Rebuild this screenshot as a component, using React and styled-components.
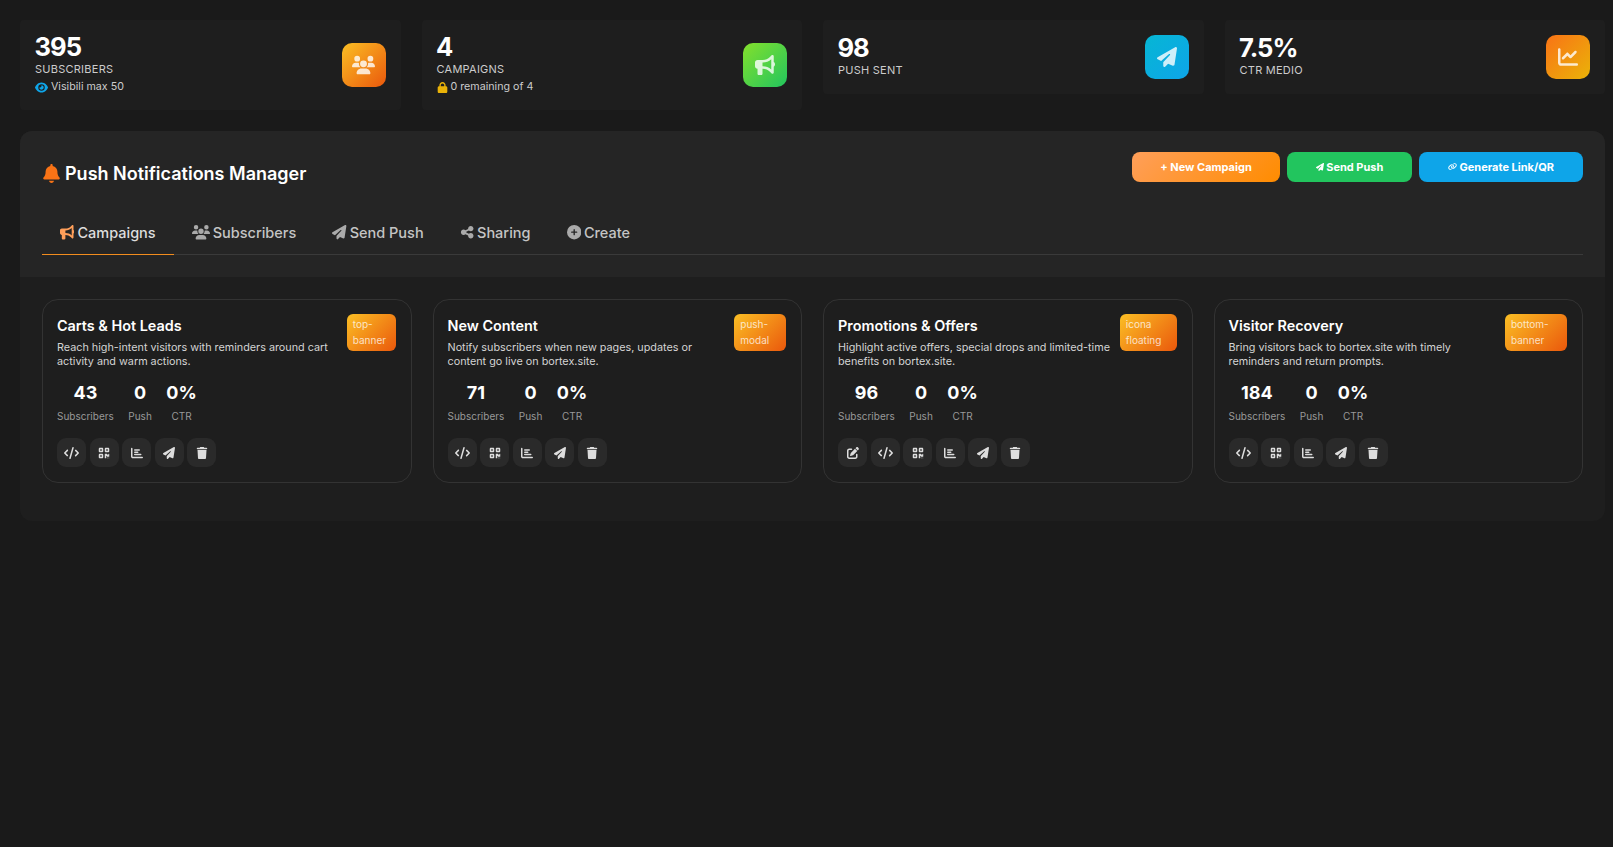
import React from "react";
import styled, { createGlobalStyle } from "styled-components";
import {
  FaBell,
  FaBullhorn,
  FaChartBar,
  FaChartLine,
  FaCirclePlus,
  FaCode,
  FaEye,
  FaLink,
  FaLock,
  FaPaperPlane,
  FaPenToSquare,
  FaQrcode,
  FaShareNodes,
  FaTrash,
  FaUsers,
} from "react-icons/fa6";

const stats = [
  { value: "395", label: "Subscribers", note: "Visibili max 50", noteIcon: "eye", icon: FaUsers, wide: true, from: "#fbbf24", to: "#ea580c" },
  { value: "4", label: "Campaigns", note: "0 remaining of 4", noteIcon: "lock", icon: FaBullhorn, from: "#84e02c", to: "#22c55e" },
  { value: "98", label: "Push sent", icon: FaPaperPlane, from: "#06b6d4", to: "#0ea5e9" },
  { value: "7.5%", label: "CTR medio", icon: FaChartLine, from: "#f97316", to: "#eab308" },
];

const tabs = [
  { name: "Campaigns", icon: FaBullhorn, active: true },
  { name: "Subscribers", icon: FaUsers, wide: true },
  { name: "Send Push", icon: FaPaperPlane },
  { name: "Sharing", icon: FaShareNodes },
  { name: "Create", icon: FaCirclePlus },
];

const campaigns = [
  { title: "Carts & Hot Leads", desc: "Reach high-intent visitors with reminders around cart activity and warm actions.", badge: "top-banner", subs: 43 },
  { title: "New Content", desc: "Notify subscribers when new pages, updates or content go live on bortex.site.", badge: "push-modal", subs: 71 },
  { title: "Promotions & Offers", desc: "Highlight active offers, special drops and limited-time benefits on bortex.site.", badge: "icona floating", subs: 96, editable: true },
  { title: "Visitor Recovery", desc: "Bring visitors back to bortex.site with timely reminders and return prompts.", badge: "bottom-banner", subs: 184 },
];

export default function App() {
  return (
    <>
      <GlobalStyle />
      <Page>
        <StatGrid>
          {stats.map((s) => (
            <StatCard key={s.label}>
              <div>
                <StatValue>{s.value}</StatValue>
                <StatLabel>{s.label}</StatLabel>
                {s.note && (
                  <StatNote>
                    {s.noteIcon === "eye" ? <FaEye color="#0ea5e9" size={13} /> : <FaLock color="#eab308" size={11} />}
                    {s.note}
                  </StatNote>
                )}
              </div>
              <StatIcon $from={s.from} $to={s.to} $wide={s.wide}>
                <s.icon />
              </StatIcon>
            </StatCard>
          ))}
        </StatGrid>

        <Panel>
          <PanelHeader>
            <TitleRow>
              <Title>
                <BellIcon />
                Push Notifications Manager
              </Title>
              <Actions>
                <ActionButton $bg="linear-gradient(135deg, #ff9f5a, #ff8c00)" $width={148}>+ New Campaign</ActionButton>
                <ActionButton $bg="#22c55e" $width={125}><FaPaperPlane size={8} /> Send Push</ActionButton>
                <ActionButton $bg="#0ea5e9" $width={164}><FaLink size={9} /> Generate Link/QR</ActionButton>
              </Actions>
            </TitleRow>
            <Tabs>
              {tabs.map((t) => (
                <Tab key={t.name} $active={t.active} $wide={t.wide}>
                  <t.icon />
                  <span>{t.name}</span>
                </Tab>
              ))}
            </Tabs>
          </PanelHeader>

          <CardGrid>
            {campaigns.map((c) => (
              <CampaignCard key={c.title}>
                <CardHead>
                  <div>
                    <CardTitle>{c.title}</CardTitle>
                    <CardDesc>{c.desc}</CardDesc>
                  </div>
                  <Badge>{c.badge}</Badge>
                </CardHead>
                <Metrics>
                  <Metric><b>{c.subs}</b><span>Subscribers</span></Metric>
                  <Metric><b>0</b><span>Push</span></Metric>
                  <Metric><b>0%</b><span>CTR</span></Metric>
                </Metrics>
                <IconRow>
                  {c.editable && <IconButton><FaPenToSquare /></IconButton>}
                  <IconButton $wide><FaCode /></IconButton>
                  <IconButton><FaQrcode /></IconButton>
                  <IconButton><FaChartBar /></IconButton>
                  <IconButton><FaPaperPlane /></IconButton>
                  <IconButton><FaTrash /></IconButton>
                </IconRow>
              </CampaignCard>
            ))}
          </CardGrid>
        </Panel>
      </Page>
    </>
  );
}

const GlobalStyle = createGlobalStyle`
  html, body {
    margin: 0;
    background: #1a1a1a;
    font-family: Inter, "Liberation Sans", sans-serif;
  }
  * {
    box-sizing: border-box;
  }
`;

const Page = styled.div`
  min-height: 847px;
  padding: 20px 8px 0 20px;
  background: #1a1a1a;
  color: #fff;
`;

const StatGrid = styled.div`
  display: grid;
  grid-template-columns: repeat(4, 1fr);
  gap: 21px;
  align-items: start;
  margin-bottom: 21px;
`;

const StatCard = styled.div`
  display: flex;
  align-items: center;
  justify-content: space-between;
  padding: 15px;
  background: #1e1e1e;
  border-radius: 4px;
`;

const StatValue = styled.div`
  margin-left: -0.5px;
  font-size: 25.6px;
  font-weight: 700;
  line-height: 24px;
  letter-spacing: -1px;
`;

const StatLabel = styled.div`
  margin-top: 2px;
  font-size: 11px;
  line-height: 17px;
  letter-spacing: 0.25px;
  text-transform: uppercase;
  color: #ccc;
`;

const StatNote = styled.div`
  display: flex;
  align-items: center;
  gap: 3px;
  margin-top: 1px;
  font-size: 10.7px;
  line-height: 16px;
  color: #ccc;
`;

const StatIcon = styled.div`
  display: flex;
  align-items: center;
  justify-content: center;
  width: 44px;
  height: 44px;
  border-radius: 10px;
  font-size: 20px;
  color: rgba(255, 255, 255, 0.8);
  background: linear-gradient(135deg, ${(p) => p.$from}, ${(p) => p.$to});

  svg {
    width: ${(p) => (p.$wide ? "1.15em" : "1em")};
  }
`;

const Panel = styled.section`
  background: #1e1e1e;
  border-radius: 12px;
`;

const PanelHeader = styled.div`
  padding: 21px 22px 22px;
  background: #252525;
  border-radius: 12px 12px 0 0;
`;

const TitleRow = styled.div`
  display: flex;
  align-items: flex-start;
  justify-content: space-between;
  height: 59px;
`;

const Title = styled.h1`
  display: flex;
  align-items: center;
  gap: 4px;
  margin: 10px 0 0;
  font-size: 18px;
  font-weight: 600;
  line-height: 24px;
`;

const BellIcon = styled(FaBell)`
  margin-top: -1px;
  font-size: 19px;
  color: #f97316;
`;

const Actions = styled.div`
  display: flex;
  gap: 7px;
`;

const ActionButton = styled.button`
  width: ${(p) => p.$width}px;
  height: 30px;
  padding: 0 0 1px;
  border: 0;
  border-radius: 8px;
  background: ${(p) => p.$bg};
  color: #fff;
  font-family: inherit;
  font-size: 11px;
  font-weight: 700;
`;

const Tabs = styled.div`
  display: flex;
  border-bottom: 1px solid #3a3a3a;
`;

const Tab = styled.div`
  display: flex;
  align-items: center;
  gap: 3px;
  height: 44px;
  margin-bottom: -1px;
  padding: 0 18px;
  font-size: 14.5px;
  font-weight: 500;
  color: ${(p) => (p.$active ? "#ddd" : "#c4c4c4")};
  border-bottom: 1px solid ${(p) => (p.$active ? "#f28c1e" : "transparent")};

  svg {
    font-size: 14.4px;
    width: ${(p) => (p.$wide ? "1.25em" : "1em")};
    color: ${(p) => (p.$active ? "#ff9f5a" : "#aaa")};
  }
`;

const CardGrid = styled.div`
  display: grid;
  grid-template-columns: repeat(4, 1fr);
  gap: 21px;
  padding: 22px 22px 38px;
`;

const CampaignCard = styled.article`
  height: 184px;
  padding: 14px 15px 14px 14px;
  border: 1px solid #333;
  border-radius: 16px;
  background: #1e1e1e;
`;

const CardHead = styled.div`
  display: flex;
  align-items: flex-start;
  justify-content: space-between;
  gap: 8px;
`;

const CardTitle = styled.h3`
  margin: 2px 0 5px;
  font-size: 14.4px;
  font-weight: 600;
  line-height: 20px;
`;

const CardDesc = styled.p`
  margin: 0;
  font-size: 10.8px;
  line-height: 13.6px;
  color: #d4d4d4;
`;

const Badge = styled.span`
  padding: 3px 6px;
  border-radius: 6px;
  font-size: 10px;
  line-height: 15.5px;
  color: rgba(255, 255, 255, 0.75);
  background: linear-gradient(135deg, #fbbf24, #ea580c);
`;

const Metrics = styled.div`
  display: flex;
  gap: 14.5px;
  margin-top: 13px;
`;

const Metric = styled.div`
  display: flex;
  flex-direction: column;
  align-items: center;

  b {
    font-size: 18px;
    font-weight: 700;
    line-height: 24px;
  }

  span {
    margin-top: 4px;
    font-size: 10px;
    line-height: 14px;
    color: #999;
  }
`;

const IconRow = styled.div`
  display: flex;
  gap: 3.5px;
  margin-top: 15px;
`;

const IconButton = styled.button`
  display: flex;
  align-items: center;
  justify-content: center;
  width: 29px;
  height: 29px;
  padding: 0;
  border: 0;
  border-radius: 9px;
  background: #2a2a2a;
  color: #ddd;
  font-size: 12px;

  svg {
    width: ${(p) => (p.$wide ? "1.25em" : "1em")};
  }
`;
